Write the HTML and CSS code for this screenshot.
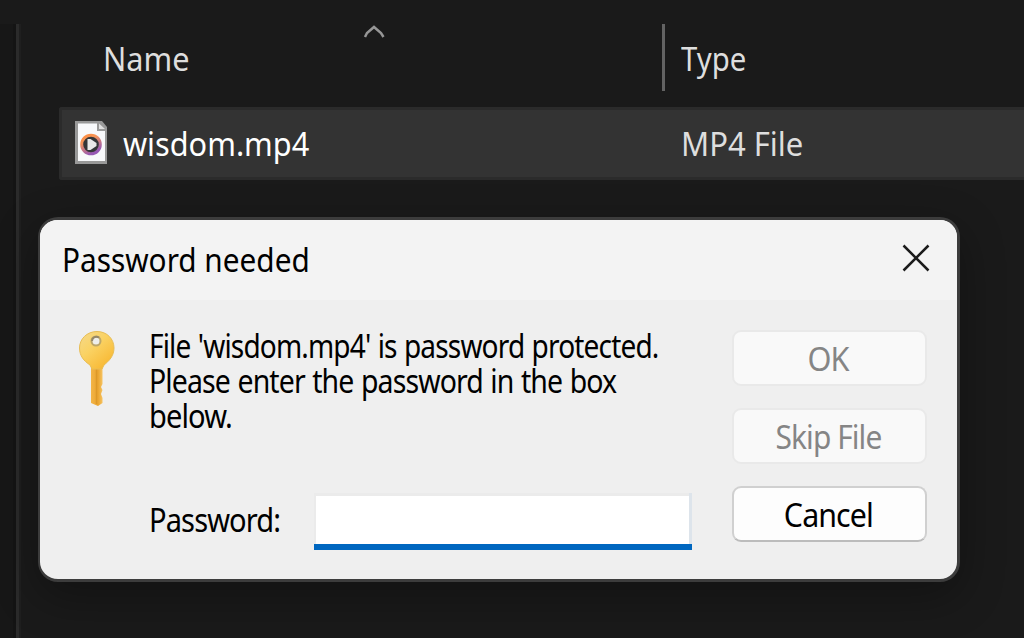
FILE: index.html
```html
<!DOCTYPE html>
<html lang="en">
<head>
<meta charset="utf-8">
<title>Password needed</title>
<link rel="stylesheet" href="styles.css">
</head>
<body>
<div class="explorer">
  <div class="nav-pane"></div>
  <div class="splitter"></div>
  <main class="files">
    <div class="header">
      <div class="col-name"><span class="t t-name">Name</span>
        <svg class="sort" width="24" height="15" viewBox="0 0 24 15"><path d="M3 13L5 9L12 3L19 9L21.500 13" fill="none" stroke="#969696" stroke-width="2.500"/></svg>
      </div>
      <div class="col-type"><span class="t t-type">Type</span></div>
    </div>
    <div class="row">
      <svg class="file-icon" width="32" height="43" viewBox="0 0 32 43">
        <defs><linearGradient id="ring" x1="0" y1="0" x2=".5" y2="1"><stop offset="0" stop-color="#ff8c3c"/><stop offset=".35" stop-color="#f4945a"/><stop offset="1" stop-color="#9658b4"/></linearGradient></defs>
        <path d="M0 0H27L32 6V43H0Z" fill="#999"/>
        <path d="M3 2.500H22V10H30V40H3Z" fill="#f8f9fb"/>
        <path d="M24 2.500L30 8H24Z" fill="#e0e0e0"/>
        <circle cx="16" cy="23.500" r="9.300" fill="#343638" stroke="url(#ring)" stroke-width="3"/>
        <path d="M12.500 18H15.500L21.500 22V25L15.500 29H12.500Z" fill="#e9e9e9"/>
      </svg>
      <div class="file-name"><span class="t t-file">wisdom.mp4</span></div>
      <div class="file-type"><span class="t t-mp4">MP4 File</span></div>
    </div>
  </main>
</div>
<section class="dialog">
  <header class="title"><span class="t t-title">Password needed</span>
    <svg class="close" width="28" height="28" viewBox="0 0 28 28"><path d="M1.500 1.500L26.500 26.500M26.500 1.500L1.500 26.500" stroke="#1b1b1b" stroke-width="2.500"/></svg>
  </header>
  <div class="body">
    <svg class="key" width="38" height="78" viewBox="0 0 38 78">
      <defs>
        <linearGradient id="head" x1="0" y1="0" x2=".8" y2="1"><stop offset="0" stop-color="#f4d98c"/><stop offset=".45" stop-color="#fad263"/><stop offset="1" stop-color="#f8b62f"/></linearGradient>
        <linearGradient id="stem" x1="0" x2="1"><stop offset="0" stop-color="#f3b548"/><stop offset=".6" stop-color="#eaa42f"/><stop offset="1" stop-color="#f6c362"/></linearGradient>
      </defs>
      <path d="M13 36H24.500V54L23 57L24.500 60L23 64L24.500 68V73L20 76L13 73Z" fill="url(#stem)"/>
      <path d="M18.500 37V74" stroke="#dc982a" stroke-width="1.500"/>
      <path d="M19 1.500C29 1.500 36 9 36 18C36 26 31 31 26 35L24 39H14L12 35C6 31 1.500 26 1.500 18C1.500 9 9 1.500 19 1.500Z" fill="url(#head)" stroke="#e8bd54" stroke-width="1"/>
      <circle cx="18" cy="11" r="4.500" fill="#eeeeeb" stroke="#bda769" stroke-width="2"/>
      <path d="M14 11A4.500 4.500 0 0 1 21 7.500" fill="none" stroke="#958768" stroke-width="2"/>
    </svg>
    <div class="content">
      <p class="message"><span class="t t-m1">File 'wisdom.mp4' is password protected.</span><span class="t t-m2">Please enter the password in the box</span><span class="t t-m3">below.</span></p>
      <div class="field"><label for="password"><span class="t t-label">Password:</span></label><input id="password" type="password"></div>
    </div>
    <div class="buttons">
      <button disabled><span class="t t-ok">OK</span></button>
      <button disabled><span class="t t-skip">Skip File</span></button>
      <button class="active"><span class="t t-cancel">Cancel</span></button>
    </div>
  </div>
</section>
</body>
</html>
```
FILE: styles.css
```css
* { box-sizing: border-box; }
body { margin: 0; width: 1024px; height: 638px; overflow: hidden; background: #1a1a1a; font: 33px/36px "Noto Sans", "Open Sans", sans-serif; color: #dedede; position: relative; }
.t { display: inline-block; white-space: nowrap; transform-origin: left center; }
.t-name { transform: scaleX(.93); }
.t-type { transform: scaleX(.89); }
.t-file { transform: scaleX(.93); }
.t-mp4 { transform: scaleX(.94); }
.t-title { transform: scaleX(.902); }
.message .t, .field .t, .buttons .t { letter-spacing: -1px; }
.message .t { word-spacing: 1px; }
.t-m1 { transform: scaleX(.85); }
.t-m2 { transform: scaleX(.862); }
.t-m3 { transform: scaleX(.88); }
.t-label { transform: scaleX(.88); }
.t-ok { transform: scaleX(.93); }
.t-skip { transform: scaleX(.905); }
.t-cancel { transform: scaleX(.92); }
.explorer { display: flex; height: 638px; padding-top: 24px; }
.nav-pane { width: 13px; background: #171717; }
.splitter { width: 8px; background: #2b2b2b; border-left: 3px solid #141414; border-right: 2px solid #1f1f1f; }
.files { flex: 1; padding-left: 38px; }
.header { display: flex; height: 67px; }
.col-name { width: 606px; border-right: 3px solid #636363; padding: 17px 0 0 44px; display: flex; }
.sort { margin: -17px 0 0 166px; }
.col-type { padding: 17px 0 0 16px; }
.row { display: flex; height: 73px; margin-top: 16px; background: #333; border: 3px solid #2b2b2b; border-right: 0; border-radius: 3px 0 0 3px; padding: 11px 0 0 13px; }
.file-icon { flex: none; }
.file-name { width: 574px; padding: 5px 0 0 16px; color: #fff; }
.file-type { padding-top: 5px; }
.dialog { position: absolute; left: 38px; top: 217px; width: 922px; height: 365px; border: 3px solid #3c3c3c; border-left-width: 2px; border-radius: 20px; background: #efefef; color: #000; overflow: hidden; box-shadow: 0 14px 45px rgba(0,0,0,.32); }
.title { display: flex; justify-content: space-between; height: 80px; background: #f3f3f3; padding: 22px 27px 0 22px; }
.close { margin-top: 2px; }
.body { display: flex; padding: 30px 30px 0 38px; }
.key { flex: none; }
.content { width: 583px; padding: 0 0 0 31px; }
.message { display: flex; flex-direction: column; align-items: flex-start; margin: -2px 0 0; padding-left: 2px; height: 165px; line-height: 35px; }
.field { display: flex; height: 57px; }
.field label { width: 167px; padding: 9px 0 0 2px; }
.field input { width: 378px; height: 57px; border: 0; background: linear-gradient(#0067c0, #0067c0) 0 100% / 100% 6px no-repeat, linear-gradient(#dde4eb, #dde4eb) 100% 0 / 3px 100% no-repeat, linear-gradient(#ebebeb, #ebebeb) 0 0 / 2px 100% no-repeat, linear-gradient(#ebebeb, #ebebeb) 0 0 / 100% 3px no-repeat, #fff; outline: 0; padding: 0 8px; font: inherit; border-radius: 0; flex: none; }
.buttons { display: flex; flex-direction: column; gap: 22px; margin-left: 33px; width: 195px; flex: none; }
.buttons button { height: 56px; border: 2px solid #e9e9e9; border-radius: 9px; background: #f9f9f9; color: #858585; font: inherit; padding: 1px 3px 0 0; text-align: center; }
.buttons .active { border: 2px solid #d0d0d0; border-bottom-color: #bcbcbc; background: #fdfdfd; color: #000; }
.buttons .t { transform-origin: center; }
```
